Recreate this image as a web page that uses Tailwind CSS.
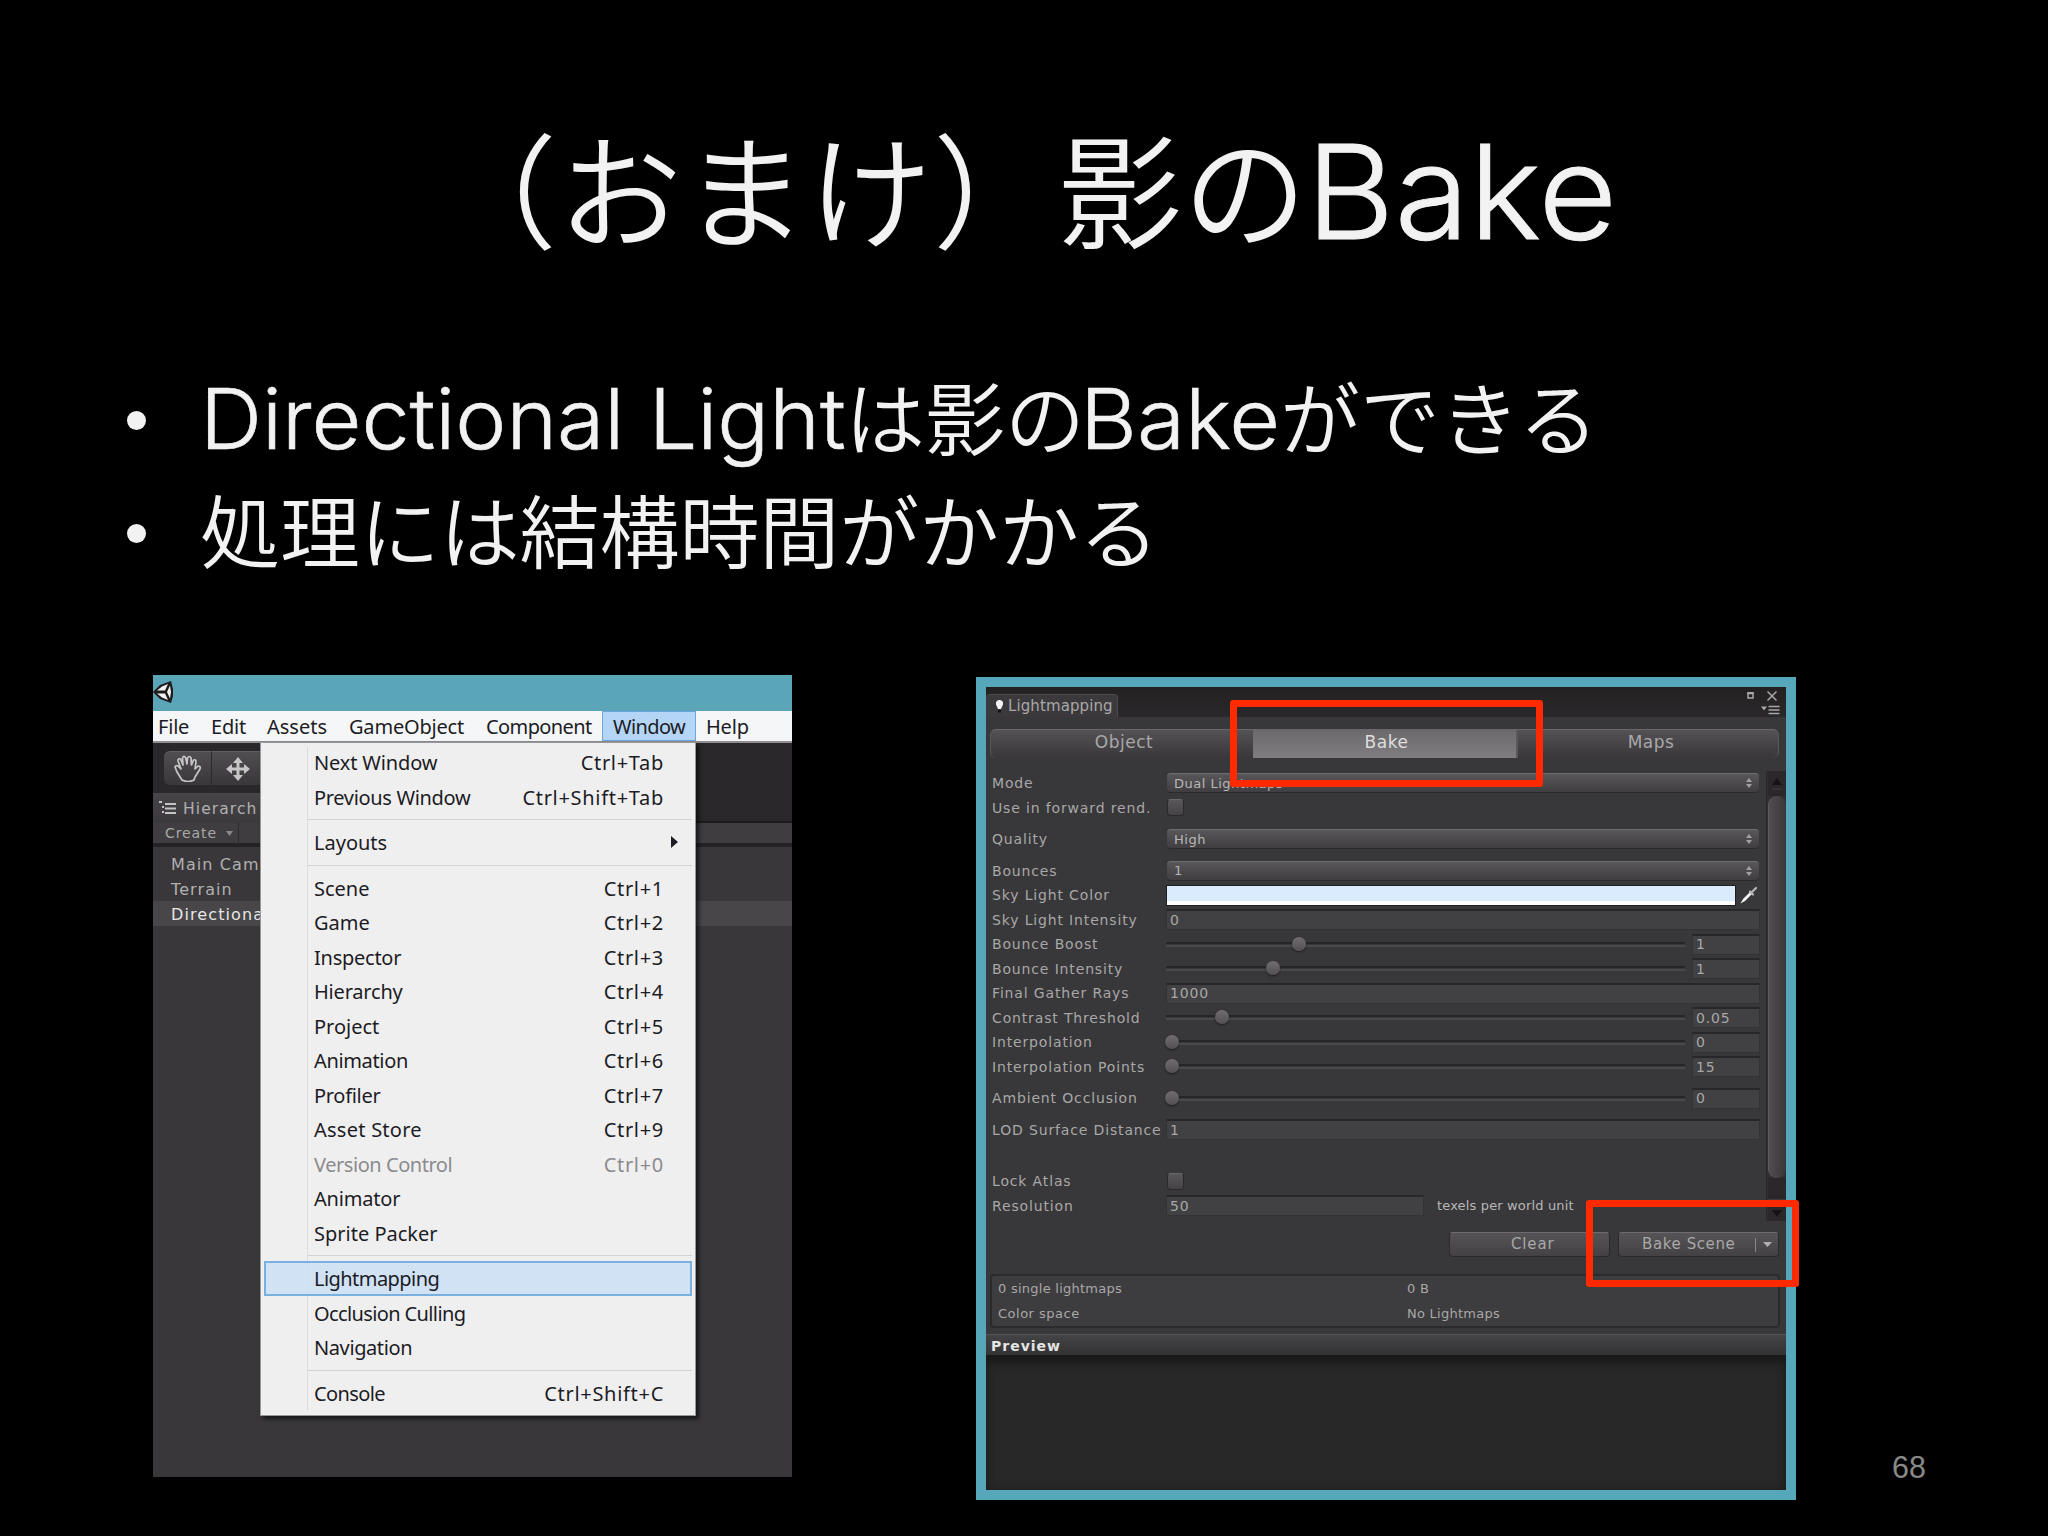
<!DOCTYPE html>
<html lang="ja">
<head>
<meta charset="utf-8">
<title>影のBake</title>
<script src="https://cdn.jsdelivr.net/npm/@tailwindcss/browser@4"></script>
</head>
<body class="bg-black">
<main class="relative flex h-[1536px] w-[2048px] flex-col overflow-hidden bg-black text-[#f2f2f2]">
  <h1 class="flex h-[180px] items-baseline whitespace-nowrap pt-[95px] pl-[433px] font-['Noto_Sans_CJK_JP',sans-serif] text-[124px] leading-[180px] font-[350]"><span class="tracking-[1px]">（おまけ）影の</span><span class="-ml-[2px] origin-left scale-x-[1.04] font-['Inter',sans-serif] text-[131px] font-light [-webkit-text-stroke:1px_#f2f2f2]">Bake</span></h1>
  <ul class="mt-[178px] flex h-[317px] flex-col font-['Noto_Sans_CJK_JP',sans-serif] text-[80px] leading-[113px] font-[350] whitespace-nowrap">
    <li class="flex h-[113px] items-baseline pl-[127px]"><span class="mr-[54px] size-[19px] shrink-0 -translate-y-[19px] rounded-full bg-[#f2f2f2]"></span><span class="w-[645px] origin-left scale-x-[1.025] font-['Inter',sans-serif] text-[84px] font-light [-webkit-text-stroke:0.6px_#f2f2f2]">Directional Light</span><span class="w-[235px]">は影の</span><span class="w-[200px] origin-left scale-x-[1.043] font-['Inter',sans-serif] text-[84px] font-light [-webkit-text-stroke:0.6px_#f2f2f2]">Bake</span><span>ができる</span></li>
    <li class="flex h-[113px] items-baseline pl-[127px]"><span class="mr-[54px] size-[19px] shrink-0 -translate-y-[19px] rounded-full bg-[#f2f2f2]"></span><span class="tracking-[-0.1px]">処理には結構時間がかかる</span></li>
  </ul>

  <div class="flex items-start pl-[153px]">
    <!-- Editor window with the open Window menu -->
    <section class="relative flex h-[802px] w-[639px] flex-col bg-[#39373a] font-['Noto_Sans',sans-serif] text-[20px]">
      <div class="flex h-[36px] shrink-0 items-center bg-[#5aa5b8]">
        <svg class="-mt-[3px] h-[24px] w-[21px]" viewBox="0 0 21 24"><path d="M0 12 L7 5 L18 1 L20 9 L20 16 L18 23 L7 19 Z" fill="#1d1d1d"/><path d="M4 10.500 L9 6.500 L15 4 L12 10.500 Z M4 13.500 L12 13.500 L15 20 L9 17.500 Z M17 5.500 L18 12 L17 18.500 L14 12 Z" fill="#f2f2f2"/></svg>
      </div>
      <nav class="flex h-[32px] shrink-0 items-stretch border-b-2 border-[#8e8e90] bg-[#f5f6f8] pl-[5px] leading-[32px] whitespace-nowrap text-[#1c1c24]">
        <span class="w-[53px] tracking-[-0.2px]">File</span><span class="w-[56px] tracking-[-0.2px]">Edit</span><span class="w-[82px]">Assets</span><span class="w-[137px] tracking-[-0.2px]">GameObject</span><span class="w-[116px] tracking-[-0.6px]">Component</span><span class="w-[94px] border border-[#6aa7e0] bg-[#b5d5f7] pl-[10px] leading-[30px] tracking-[-0.6px]">Window</span><span class="pl-[10px] tracking-[-0.2px]">Help</span>
      </nav>
      <div class="flex h-[50px] shrink-0 bg-[#2a282a] pt-[8px] pl-[11px]">
        <div class="flex h-[34px] w-[48px] items-center justify-center rounded-l-md border-t border-r border-t-[#626064] border-r-[#2c2a2c] bg-linear-to-b from-[#504e51] to-[#39373a]">
          <svg class="size-[27px]" viewBox="0 0 27 27" fill="none" stroke="#c6c6c6" stroke-width="1.7" stroke-linejoin="round" stroke-linecap="round"><path d="M8 25 L3 17 L1 12 Q2 10 4 11 L7 14 L4 6 Q4 3 6.500 4 L9 10 L8.500 3 Q9.500 0 11.500 2.500 L13 9 L13.500 3 Q15.500 0 17 3 L17.500 10 L19.500 5 Q22 4 22 7 L21 14 L24 11 Q27 11 26 14 L21 22 L20 25 Q14 28 8 25"/></svg>
        </div>
        <div class="flex h-[34px] w-[60px] items-center border-t border-t-[#626064] bg-linear-to-b from-[#504e51] to-[#39373a] pl-[14px]">
          <svg class="size-[24px]" viewBox="0 0 24 24" fill="#c6c6c6"><path d="M12 0 L17 6 H13.500 V10.500 H18 V7 L24 12 L18 17 V13.500 H13.500 V18 H17 L12 24 L7 18 H10.500 V13.500 H6 V17 L0 12 L6 7 V10.500 H10.500 V6 H7 Z"/></svg>
        </div>
      </div>
      <div class="flex flex-col font-['DejaVu_Sans',sans-serif] text-[16px] tracking-[1.1px] whitespace-nowrap text-[#b0b0b0]">
        <div class="flex h-[30px] items-center">
          <div class="flex h-full w-[107px] items-center gap-[7px] bg-linear-to-b from-[#474548] to-[#3b393c] pl-[6px]">
            <svg class="h-[14px] w-[17px]" viewBox="0 0 17 14" fill="#c4c4c4"><path d="M0 0h3v2H0z M6 2h11v2H6z M3 5h2v2H3z M6 6.500h11v2H6z M3 10h2v2H3z M6 11h11v2H6z"/></svg>
            <span class="pt-[4px] text-[15.5px] tracking-[1.1px]">Hierarch</span>
          </div>
          <div class="h-full grow border-b-2 border-[#1d1b1d] bg-[#2a282a]"></div>
        </div>
        <div class="flex h-[24px] items-center border-b-4 border-[#252325] bg-[#3f3d40] pl-[12px] text-[14px] tracking-[0.9px] text-[#a9a9a9]">
          <span class="pt-px">Create</span>
          <svg class="ml-[9px] h-[5px] w-[7px]" viewBox="0 0 7 5"><path d="M0 0H7L3.500 5Z" fill="#8a8a8a"/></svg>
          <span class="ml-[5px] h-full w-px bg-[#2d2b2d]"></span>
        </div>
        <div class="flex flex-col pt-[4px]">
          <span class="h-[25px] pl-[18px] leading-[28px]">Main Cam</span>
          <span class="h-[25px] pl-[18px] leading-[28px]">Terrain</span>
          <span class="h-[25px] bg-[#484649] pl-[18px] leading-[28px] text-[#e6e6e6]">Directiona</span>
        </div>
      </div>
      <!-- Drop-down menu -->
      <div id="menu" class="absolute top-[67px] left-[107px] flex h-[674px] w-[436px] flex-col border border-[#979797] bg-[#f0eff0] px-[3px] pt-[2px] text-[#1c1c24] shadow-[3px_3px_4px_rgba(0,0,0,0.6)]"><span class="absolute top-[4px] left-[46px] h-[664px] w-px bg-[#dcdadc]"></span></div>
    </section>

    <!-- Lightmapping window -->
    <section class="mt-[2px] ml-[184px] flex h-[823px] w-[820px] flex-col border-[10px] border-[#57a7ba] bg-[#383739] font-['DejaVu_Sans',sans-serif] text-[14px] tracking-[0.85px] whitespace-nowrap text-[#a8a8a8]">
      <header class="flex h-[30px] shrink-0 items-end justify-between bg-linear-to-b from-[#232122] to-[#2a282a]">
        <div class="flex h-[23px] w-[132px] items-center rounded-t-sm border-t border-r border-[#4a484b] bg-[#3b393c] pl-[10px] text-[15px] tracking-[0.1px]">
          <svg class="mr-[5px] h-[13px] w-[7px] shrink-0" viewBox="0 0 7 13"><path d="M3.500 0 A3.500 3.500 0 0 1 6.500 5.500 L5 9 H2 L.5 5.500 A3.500 3.500 0 0 1 3.500 0Z" fill="#f4f4f4"/><path d="M2 10h3v2.500H2z" fill="#111"/></svg>
          <span class="pt-px">Lightmapping</span>
        </div>
        <svg class="mr-[6px] h-[26px] w-[36px]" viewBox="0 0 36 26" fill="none" stroke="#a8a8a8"><path d="M4 2.500h5v4.500h-5z" stroke-width="1.500"/><path d="M3.200 2h6.600" stroke-width="2"/><path d="M23.500 .5l9 9M32.500 .5l-9 9" stroke-width="1.500"/><path d="M17 15.500h6l-3 4z" fill="#a8a8a8" stroke="none"/><path d="M24.500 15.500h11M24.500 19h11M24.500 22.500h11" stroke-width="1.700"/></svg>
      </header>
      <div class="mt-[12px] ml-[4px] flex h-[29px] w-[789px] shrink-0 rounded-md border-t border-r border-l border-t-[#6a686b] border-r-[#59575a] border-l-[#59575a] bg-linear-to-b from-[#545255] to-[#39373a] text-center text-[17px] leading-[25px] tracking-[0.5px]">
        <span class="w-[262px] pl-1">Object</span><span class="w-[265px] border-r-2 border-[#5a585b] bg-linear-to-b from-[#6b696c] to-[#7f7d80] pl-[4px] text-[#dedede]">Bake</span><span class="grow pl-[6px]">Maps</span>
      </div>
      <div class="mt-[13px] flex h-[450px] shrink-0">
        <div id="rows" class="flex w-[780px] flex-col pl-[6px]"></div>
        <div class="flex w-[20px] flex-col items-center border-l border-[#2a282a] bg-[#302e31]">
          <svg class="h-[25px] w-[18px] shrink-0 bg-[#2a282a]" viewBox="0 0 18 25"><path d="M4 14h10L9 7z" fill="#151415"/><path d="M4 18h10" stroke="#3d3b3e"/></svg>
          <span class="h-[382px] w-[18px] shrink-0 rounded-full border-l border-[#5d5b5e] bg-linear-to-r from-[#4f4d50] to-[#39373a]"></span>
          <svg class="h-[43px] w-[18px] shrink-0 bg-[#2a282a]" viewBox="0 0 18 43"><path d="M0 22h18" stroke="#3d3b3e" stroke-width="2"/><path d="M4 32h10l-5 7z" fill="#151415"/></svg>
        </div>
      </div>
      <div class="mt-[11px] flex h-[25px] shrink-0 justify-end gap-[8px] pr-[7px] text-[15px] leading-[23px]">
        <div class="w-[161px] rounded-sm border border-[#2b292b] border-t-[#6e6c6f] bg-linear-to-b from-[#565457] to-[#434144] pl-[61px]">Clear</div>
        <div class="flex w-[161px] items-center rounded-sm border border-[#2b292b] border-t-[#6e6c6f] bg-linear-to-b from-[#565457] to-[#434144] pl-[23px]"><span class="tracking-[0.6px]">Bake Scene</span><span class="ml-auto h-[14px] w-px bg-[#8a888b]"></span><svg class="mr-[6px] ml-[7px] h-[5px] w-[9px]" viewBox="0 0 9 5"><path d="M0 0H9L4.500 5Z" fill="#b0b0b0"/></svg></div>
      </div>
      <div class="mt-[17px] mr-[6px] ml-[4px] grid h-[54px] shrink-0 grid-cols-[409px_1fr] rounded-sm border-2 border-[#2b2a2c] bg-[#3d3c3e] pl-[6px] text-[13px] leading-[25px] tracking-[0.25px]">
        <span>0 single lightmaps</span><span>0 B</span><span class="tracking-[0.5px]">Color space</span><span>No Lightmaps</span>
      </div>
      <div class="mt-[6px] h-[21px] shrink-0 border-t border-[#555356] bg-linear-to-b from-[#444345] to-[#333234] pl-[5px] text-[14px] leading-[22px] font-bold tracking-[1px] text-[#e4e4e4]">Preview</div>
      <div class="grow bg-[#282829] shadow-[inset_0_10px_8px_-2px_#1a1a1b,inset_0_0_8px_#1f1f20]"></div>
    </section>
  </div>

  <span class="absolute top-[700px] left-[1230px] h-[87px] w-[313px] rounded-[3px] border-[7px] border-[#ff2a00]"></span>
  <span class="absolute top-[1200px] left-[1586px] h-[87px] w-[213px] rounded-[3px] border-[7px] border-[#ff2a00]"></span>
  <span class="absolute top-[1447px] left-[1892px] origin-left scale-x-[0.95] font-['Liberation_Sans',sans-serif] text-[32px] leading-[40px] text-[#898989]">68</span>
</main>
<script>
// label, shortcut, letter spacing in px
const entries = [['Next Window','Ctrl+Tab',-.15],['Previous Window','Ctrl+Shift+Tab',-.33],null,['Layouts','>',0],null,['Scene','Ctrl+1',0],['Game','Ctrl+2',0],['Inspector','Ctrl+3',-.25],['Hierarchy','Ctrl+4',-.2],['Project','Ctrl+5',0],['Animation','Ctrl+6',-.35],['Profiler','Ctrl+7',-.3],['Asset Store','Ctrl+9',.25],['Version Control','Ctrl+0',-.45],['Animator','',-.2],['Sprite Packer','',0],null,['Lightmapping','',-.55],['Occlusion Culling','',-.62],['Navigation','',-.4],null,['Console','Ctrl+Shift+C',-.6]];
document.getElementById('menu').insertAdjacentHTML('beforeend', entries.map(e => {
  if (!e) return '<div class="flex h-[11px] shrink-0 items-center pl-[44px]"><span class="h-px w-full bg-[#d4d2d4]"></span></div>';
  const tone = e[0] === 'Version Control' ? 'text-[#8b8b8d]' : '';
  const look = e[0] === 'Lightmapping' ? 'relative border-[#7ab0de] bg-[#c8dff5]/80' : 'border-transparent';
  const right = e[1] === '>' ? '<svg class="-mr-[14px] h-[12px] w-[7px]" viewBox="0 0 7 12"><path d="M0 0L7 6L0 12Z" fill="#1c1c24"/></svg>' : e[1] ? `<span class="pt-[2px] tracking-[0.7px]">${e[1]}</span>` : '';
  return `<div class="flex h-[34.5px] shrink-0 items-center justify-between border-2 pr-[26px] pl-[48px] whitespace-nowrap ${look} ${tone}"><span class="pt-[2px]" style="letter-spacing:${e[2]}px">${e[0]}</span>${right}</div>`;
}).join(''));

const field = (v, w) => `<span class="flex h-[21px] items-center border border-t-2 border-[#333234] border-t-[#272628] bg-[#414042] pl-[3px] ${w}"><span>${v}</span></span>`;
const popup = v => `<span class="ml-px flex h-[20px] w-[592px] items-center justify-between rounded-sm border-t border-b border-t-[#706e71] border-b-[#2b292b] bg-linear-to-b from-[#585659] to-[#403e41] pr-[7px] pl-[7px] text-[13px] tracking-[0.5px] text-[#b8b8b8]"><span>${v}</span><svg class="h-[10px] w-[6px]" viewBox="0 0 6 10" fill="#a0a0a0"><path d="M0 4L3 0L6 4Z M0 6L3 10L6 6Z"/></svg></span>`;
const slider = (x, v) => `<span class="relative mr-[7px] h-[5px] w-[519px] border-t-2 border-b-2 border-t-[#262527] border-b-[#49484a]"><span class="absolute -top-[7px] size-[14px] rounded-full bg-linear-to-b from-[#706e71] to-[#525053] shadow-[0_1px_2px_#1d1c1d]" style="left:${x}px"></span></span>${field(v, 'w-[68px]')}`;
const box = '<span class="ml-px size-[17px] rounded-sm border border-[#2b292b] border-t-[#6a686b] bg-linear-to-b from-[#59575a] to-[#454346]"></span>';
const color = '<span class="ml-px h-[19px] w-[568px] border-b-4 border-white bg-[#d9ebfd] outline outline-[#1f1e20]"></span><svg class="ml-[5px] size-[18px]" viewBox="0 0 18 18"><path d="M0.500 17.500L3 13L10 6L12 8L5 15Z" fill="#f2f2f2"/><path d="M10 5.500L13 8.500M12 6L16 2" stroke="#b5b5b5" stroke-width="2.200" stroke-linecap="round"/></svg>';
const rows = [['Mode',popup('Dual Lightmaps')],['Use in forward rend.',box],7,['Quality',popup('High')],7,['Bounces',popup('1')],['Sky Light Color',color],['Sky Light Intensity',field('0','w-[594px]')],['Bounce Boost',slider(126,'1')],['Bounce Intensity',slider(100,'1')],['Final Gather Rays',field('1000','w-[594px]')],['Contrast Threshold',slider(49,'0.05')],['Interpolation',slider(-1,'0')],['Interpolation Points',slider(-1,'15')],7,['Ambient Occlusion',slider(-1,'0')],7,['LOD Surface Distance',field('1','w-[594px]')],27,['Lock Atlas',box],['Resolution',field('50','w-[258px]') + '<span class="ml-[13px] text-[13px] tracking-[0.15px] text-[#b8b8b8]">texels per world unit</span>']];
document.getElementById('rows').innerHTML = rows.map(r => typeof r === 'number' ? `<div class="shrink-0" style="height:${r}px"></div>` : `<div class="flex h-[24.5px] shrink-0 items-center"><span class="w-[174px] shrink-0 pt-px">${r[0]}</span>${r[1]}</div>`).join('');
</script>
</body>
</html>
